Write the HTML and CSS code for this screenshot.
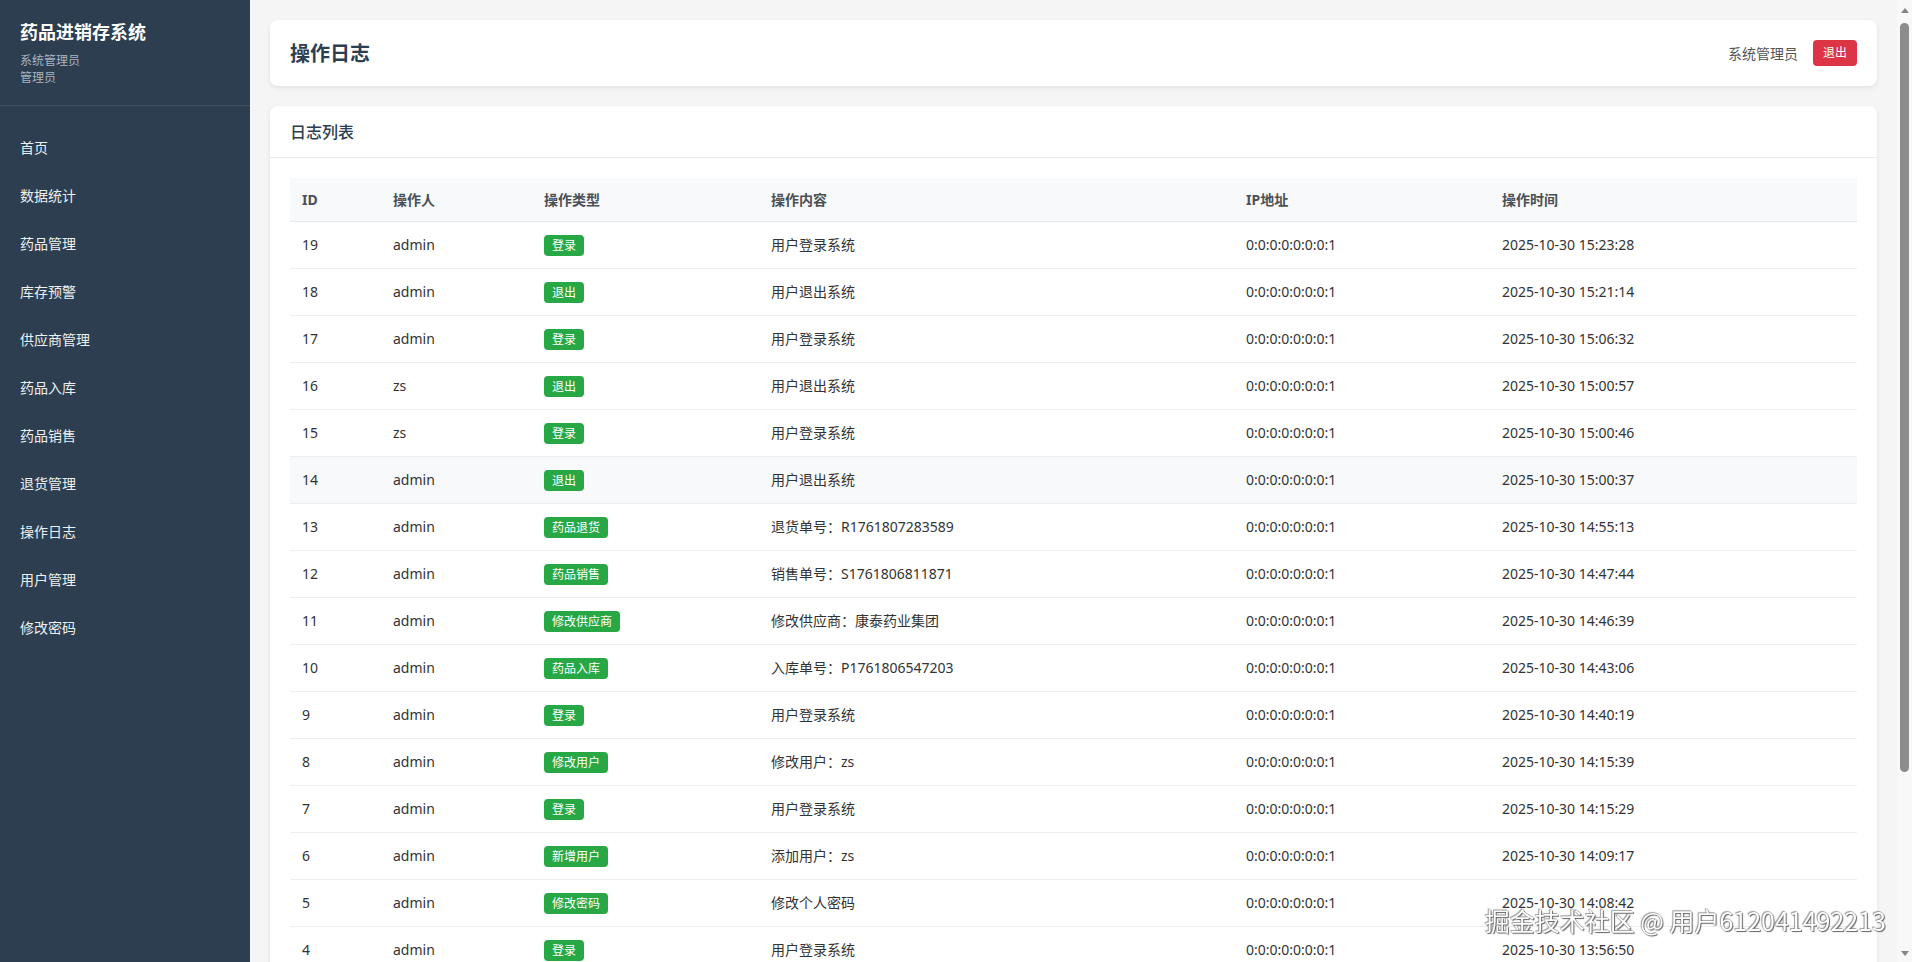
FILE: index.html
```html
<!DOCTYPE html>
<html lang="zh-CN">
<head>
<meta charset="UTF-8">
<title>操作日志 - 药品进销存系统</title>
<link rel="stylesheet" href="styles.css">
</head>
<body>
<aside class="sidebar">
  <div class="brand">
    <div class="brand-title">药品进销存系统</div>
    <div class="brand-sub">系统管理员</div>
    <div class="brand-sub">管理员</div>
  </div>
  <nav class="nav">
    <a class="nav-item">首页</a>
    <a class="nav-item">数据统计</a>
    <a class="nav-item">药品管理</a>
    <a class="nav-item">库存预警</a>
    <a class="nav-item">供应商管理</a>
    <a class="nav-item">药品入库</a>
    <a class="nav-item">药品销售</a>
    <a class="nav-item">退货管理</a>
    <a class="nav-item">操作日志</a>
    <a class="nav-item">用户管理</a>
    <a class="nav-item">修改密码</a>
  </nav>
</aside>

<main class="main">
  <header class="topbar">
    <h1 class="page-title">操作日志</h1>
    <div class="user-box">
      <span class="user-name">系统管理员</span>
      <button class="btn-logout">退出</button>
    </div>
  </header>

  <section class="card">
    <div class="card-header">日志列表</div>
    <div class="card-body">
      <table class="log-table">
        <colgroup>
          <col class="c-id"><col class="c-user"><col class="c-type"><col class="c-content"><col class="c-ip"><col class="c-time">
        </colgroup>
        <thead>
          <tr><th>ID</th><th>操作人</th><th>操作类型</th><th>操作内容</th><th>IP地址</th><th>操作时间</th></tr>
        </thead>
        <tbody>
          <tr><td>19</td><td>admin</td><td><span class="badge">登录</span></td><td>用户登录系统</td><td>0:0:0:0:0:0:0:1</td><td>2025-10-30 15:23:28</td></tr>
          <tr><td>18</td><td>admin</td><td><span class="badge">退出</span></td><td>用户退出系统</td><td>0:0:0:0:0:0:0:1</td><td>2025-10-30 15:21:14</td></tr>
          <tr><td>17</td><td>admin</td><td><span class="badge">登录</span></td><td>用户登录系统</td><td>0:0:0:0:0:0:0:1</td><td>2025-10-30 15:06:32</td></tr>
          <tr><td>16</td><td>zs</td><td><span class="badge">退出</span></td><td>用户退出系统</td><td>0:0:0:0:0:0:0:1</td><td>2025-10-30 15:00:57</td></tr>
          <tr><td>15</td><td>zs</td><td><span class="badge">登录</span></td><td>用户登录系统</td><td>0:0:0:0:0:0:0:1</td><td>2025-10-30 15:00:46</td></tr>
          <tr class="hover"><td>14</td><td>admin</td><td><span class="badge">退出</span></td><td>用户退出系统</td><td>0:0:0:0:0:0:0:1</td><td>2025-10-30 15:00:37</td></tr>
          <tr><td>13</td><td>admin</td><td><span class="badge">药品退货</span></td><td>退货单号：R1761807283589</td><td>0:0:0:0:0:0:0:1</td><td>2025-10-30 14:55:13</td></tr>
          <tr><td>12</td><td>admin</td><td><span class="badge">药品销售</span></td><td>销售单号：S1761806811871</td><td>0:0:0:0:0:0:0:1</td><td>2025-10-30 14:47:44</td></tr>
          <tr><td>11</td><td>admin</td><td><span class="badge">修改供应商</span></td><td>修改供应商：康泰药业集团</td><td>0:0:0:0:0:0:0:1</td><td>2025-10-30 14:46:39</td></tr>
          <tr><td>10</td><td>admin</td><td><span class="badge">药品入库</span></td><td>入库单号：P1761806547203</td><td>0:0:0:0:0:0:0:1</td><td>2025-10-30 14:43:06</td></tr>
          <tr><td>9</td><td>admin</td><td><span class="badge">登录</span></td><td>用户登录系统</td><td>0:0:0:0:0:0:0:1</td><td>2025-10-30 14:40:19</td></tr>
          <tr><td>8</td><td>admin</td><td><span class="badge">修改用户</span></td><td>修改用户：zs</td><td>0:0:0:0:0:0:0:1</td><td>2025-10-30 14:15:39</td></tr>
          <tr><td>7</td><td>admin</td><td><span class="badge">登录</span></td><td>用户登录系统</td><td>0:0:0:0:0:0:0:1</td><td>2025-10-30 14:15:29</td></tr>
          <tr><td>6</td><td>admin</td><td><span class="badge">新增用户</span></td><td>添加用户：zs</td><td>0:0:0:0:0:0:0:1</td><td>2025-10-30 14:09:17</td></tr>
          <tr><td>5</td><td>admin</td><td><span class="badge">修改密码</span></td><td>修改个人密码</td><td>0:0:0:0:0:0:0:1</td><td>2025-10-30 14:08:42</td></tr>
          <tr><td>4</td><td>admin</td><td><span class="badge">登录</span></td><td>用户登录系统</td><td>0:0:0:0:0:0:0:1</td><td>2025-10-30 13:56:50</td></tr>
        </tbody>
      </table>
    </div>
  </section>
</main>

<div class="scrollbar">
  <span class="arrow arrow-up"></span>
  <div class="thumb-track"><div class="thumb"></div></div>
  <span class="arrow arrow-down"></span>
</div>

<div class="watermark">掘金技术社区 @ 用户612041492213</div>
</body>
</html>
```

FILE: styles.css
```css
* { box-sizing: border-box; }

html, body {
  margin: 0;
  height: 100%;
  overflow: hidden;
}

body {
  display: flex;
  background: #f5f5f5;
  font-family: "Noto Sans", "Noto Sans CJK SC", sans-serif;
  font-size: 14px;
  color: #333;
}

/* Sidebar */
.sidebar {
  width: 250px;
  flex-shrink: 0;
  background: #2c3e50;
  color: #ecf0f1;
}

.brand {
  padding: 20px 20px 18px;
  border-bottom: 1px solid rgba(255, 255, 255, 0.1);
}

.brand-title {
  font-size: 18px;
  line-height: 25px;
  font-weight: bold;
  color: #fff;
  margin-bottom: 8px;
}

.brand-sub {
  font-size: 12px;
  line-height: 16.8px;
  color: #a9b4bf;
}

.nav {
  display: flex;
  flex-direction: column;
  padding-top: 18px;
}

.nav-item {
  display: block;
  padding: 14px 20px;
  line-height: 20px;
  font-size: 14px;
  color: #ecf0f1;
  text-decoration: none;
}

/* Main */
.main {
  flex: 1;
  min-width: 0;
  padding: 20px;
  overflow: hidden;
}

.topbar {
  display: flex;
  align-items: center;
  justify-content: space-between;
  height: 66px;
  padding: 0 20px;
  background: #fff;
  border-radius: 8px;
  box-shadow: 0 2px 5px rgba(0, 0, 0, 0.08);
  margin-bottom: 20px;
}

.page-title {
  margin: 0;
  font-size: 20px;
  line-height: 25px;
  font-weight: bold;
  color: #2c3e50;
}

.user-box {
  display: flex;
  align-items: center;
  gap: 15px;
}

.user-name {
  font-size: 14px;
  color: #555;
}

.btn-logout {
  border: none;
  background: #dc3545;
  color: #fff;
  font-family: inherit;
  font-size: 12px;
  line-height: 18px;
  padding: 4px 10px;
  border-radius: 4px;
}

.card {
  background: #fff;
  border-radius: 8px;
  box-shadow: 0 2px 5px rgba(0, 0, 0, 0.08);
}

.card-header {
  padding: 16px 20px 14px;
  font-size: 16px;
  line-height: 21px;
  font-weight: 500;
  color: #2c3e50;
  border-bottom: 1px solid #eaeaea;
}

.card-body {
  padding: 20px;
}

.log-table {
  width: 1567px;
  border-collapse: collapse;
  table-layout: fixed;
}

.c-id { width: 91px; }
.c-user { width: 151px; }
.c-type { width: 227px; }
.c-content { width: 475px; }
.c-ip { width: 256px; }
.c-time { width: 367px; }

.log-table th {
  text-align: left;
  padding: 12px;
  line-height: 19px;
  font-size: 14px;
  font-weight: bold;
  color: #495057;
  background: #f8f9fa;
  border-bottom: 1px solid #e6e8ea;
}

.log-table td {
  height: 47px;
  padding: 0 12px;
  line-height: 22px;
  font-size: 14px;
  color: #333;
  border-bottom: 1px solid #eceeef;
  white-space: nowrap;
  vertical-align: middle;
}

.log-table tr.hover td {
  background: #f8f9fa;
}

.badge {
  display: inline-block;
  vertical-align: top;
  margin-top: 0.5px;
  padding: 2px 8px;
  font-size: 12px;
  line-height: 17.5px;
  color: #fff;
  background: #28a745;
  border-radius: 4px;
}

/* Fake scrollbar */
.scrollbar {
  width: 15px;
  flex-shrink: 0;
  height: 100vh;
  background: #f8f8f8;
  display: flex;
  flex-direction: column;
  align-items: center;
  padding: 8px 0 6px;
}

.arrow {
  width: 0;
  height: 0;
  border-left: 4px solid transparent;
  border-right: 4px solid transparent;
}

.arrow-up {
  border-bottom: 5px solid #858585;
}

.arrow-down {
  border-top: 5px solid #858585;
}

.thumb-track {
  flex: 1;
  width: 100%;
  display: flex;
  justify-content: center;
  padding-top: 10px;
}

.thumb {
  width: 9px;
  height: 749px;
  background: #8c8c8c;
  border-radius: 5px;
}

/* Watermark overlay */
.watermark {
  position: fixed;
  right: 26px;
  bottom: 27px;
  font-family: "Noto Sans CJK SC", sans-serif;
  font-size: 25px;
  line-height: 30px;
  color: #fff;
  text-shadow: 0 0 1px #555, 1px 1px 1px #666, -1px -1px 1px rgba(0,0,0,0.35);
  white-space: nowrap;
}
```
